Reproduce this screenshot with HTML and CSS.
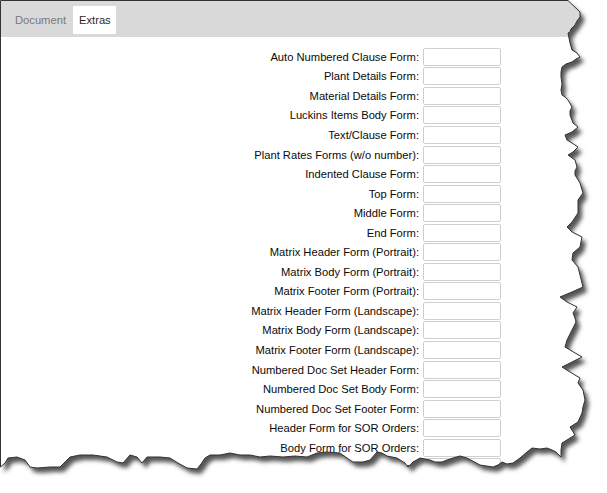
FILE: index.html
```html
<!DOCTYPE html>
<html>
<head>
<meta charset="utf-8">
<link rel="stylesheet" href="styles.css">
</head>
<body>
<div class="page">
  <div class="tabs">
    <div class="tab">Document</div>
    <div class="tab active">Extras</div>
  </div>
  <div class="form">
    <label class="lbl">Auto Numbered Clause Form:</label><input class="fld" type="text">
    <label class="lbl">Plant Details Form:</label><input class="fld" type="text">
    <label class="lbl">Material Details Form:</label><input class="fld" type="text">
    <label class="lbl">Luckins Items Body Form:</label><input class="fld" type="text">
    <label class="lbl">Text/Clause Form:</label><input class="fld" type="text">
    <label class="lbl">Plant Rates Forms (w/o number):</label><input class="fld" type="text">
    <label class="lbl">Indented Clause Form:</label><input class="fld" type="text">
    <label class="lbl">Top Form:</label><input class="fld" type="text">
    <label class="lbl">Middle Form:</label><input class="fld" type="text">
    <label class="lbl">End Form:</label><input class="fld" type="text">
    <label class="lbl">Matrix Header Form (Portrait):</label><input class="fld" type="text">
    <label class="lbl">Matrix Body Form (Portrait):</label><input class="fld" type="text">
    <label class="lbl">Matrix Footer Form (Portrait):</label><input class="fld" type="text">
    <label class="lbl">Matrix Header Form (Landscape):</label><input class="fld" type="text">
    <label class="lbl">Matrix Body Form (Landscape):</label><input class="fld" type="text">
    <label class="lbl">Matrix Footer Form (Landscape):</label><input class="fld" type="text">
    <label class="lbl">Numbered Doc Set Header Form:</label><input class="fld" type="text">
    <label class="lbl">Numbered Doc Set Body Form:</label><input class="fld" type="text">
    <label class="lbl">Numbered Doc Set Footer Form:</label><input class="fld" type="text">
    <label class="lbl">Header Form for SOR Orders:</label><input class="fld" type="text">
    <label class="lbl">Body Form for SOR Orders:</label><input class="fld" type="text">
    <label class="lbl">Footer Form for SOR Orders:</label><input class="fld" type="text">
  </div>
  <svg class="torn" width="607" height="493" viewBox="0 0 607 493">
    <defs>
      <path id="edge" d="M0.5 0.5 L568 0.5 L580 12 L580 17 L577 21 L575 25 L571 29 L570 32 L568 33 L569 38 L570 43 L572 50 L577 53 L580 57 L576 59 L572 62 L566 64 L562 67 L561 72 L561 77 L562 84 L561 90 L562 95 L565 97 L568 100 L572 107 L570 111 L570 115 L573 123 L578 127 L572 132 L565 135 L567 140 L572 143 L578 147 L573 152 L568 155 L575 160 L577 167 L575 171 L575 175 L580 183 L583 193 L578 200 L578 207 L578 213 L572 222 L567 227 L572 232 L582 237 L580 247 L573 253 L572 260 L578 267 L580 275 L583 287 L572 292 L560 297 L567 302 L577 307 L573 313 L575 318 L576 322 L572 330 L567 340 L565 347 L570 350 L582 357 L572 362 L562 367 L570 372 L580 378 L578 383 L583 390 L585 400 L583 407 L582 413 L578 422 L570 427 L575 435 L562 443 L561 450 L561 457 L556 452 L552 450 L547 448 L540 449 L532 448 L527 452 L520 458 L513 463 L507 464 L502 462 L498 465 L493 467 L480 465 L467 458 L460 456 L453 458 L447 460 L442 462 L435 462 L430 460 L420 458 L413 462 L408 467 L405 463 L397 458 L387 456 L382 453 L377 452 L370 460 L363 462 L353 462 L347 458 L340 453 L327 452 L317 453 L307 457 L295 456 L283 457 L270 456 L260 457 L250 455 L240 455 L230 453 L220 455 L210 455 L205 458 L201 464 L197 469 L187 468 L178 463 L170 458 L160 457 L147 457 L142 463 L137 457 L130 455 L123 463 L117 462 L107 457 L93 455 L80 455 L70 457 L67 460 L60 467 L50 467 L37 468 L30 467 L25 460 L17 457 L8 458 L5 463 L0.5 467 Z"/>
      <mask id="outside" maskUnits="userSpaceOnUse" x="0" y="0" width="607" height="493">
        <rect x="0" y="0" width="607" height="493" fill="#fff"/>
        <use href="#edge" fill="#000"/>
      </mask>
      <filter id="soft" x="-5%" y="-5%" width="110%" height="110%">
        <feGaussianBlur stdDeviation="2"/>
      </filter>
    </defs>
    <rect x="0" y="0" width="607" height="493" fill="#fff" mask="url(#outside)"/>
    <g mask="url(#outside)">
      <use href="#edge" fill="#555" transform="translate(4 5)" filter="url(#soft)"/>
    </g>
    <use href="#edge" fill="none" stroke="#333" stroke-width="1"/>
  </svg>
</div>
</body>
</html>
```
FILE: styles.css
```css
html, body {
  margin: 0;
  padding: 0;
  background: #fff;
}

.page {
  position: relative;
  width: 607px;
  height: 493px;
  overflow: hidden;
  background: #fff;
  font-family: "Liberation Sans", Arial, sans-serif;
  font-size: 11px;
  color: #1a1a1a;
}

.tabs {
  display: flex;
  margin-top: 1px;
  height: 36px;
  padding: 5px 0 0 9px;
  box-sizing: border-box;
  background: #d9d9d9;
}

.tab {
  height: 28px;
  line-height: 28px;
  padding: 0 7px 0 6px;
  color: #7a7a7a;
  font-size: 11.2px;
}

.tab.active {
  background: #fff;
  color: #2a2a2a;
  padding: 0 5px 0 6px;
}

.form {
  display: grid;
  grid-template-columns: 419px 78px;
  grid-auto-rows: 19.55px;
  column-gap: 4px;
  align-items: center;
  padding-top: 10px;
}

.lbl {
  text-align: right;
  white-space: nowrap;
  color: #0a0a0a;
  font-size: 11.2px;
}

.fld {
  box-sizing: border-box;
  width: 78px;
  height: 18px;
  margin: 0;
  padding: 0;
  border: 1px solid #cfcfcf;
  border-radius: 2px;
  background: #fff;
  outline: none;
}

.torn {
  position: absolute;
  left: 0;
  top: 0;
  pointer-events: none;
}
```
